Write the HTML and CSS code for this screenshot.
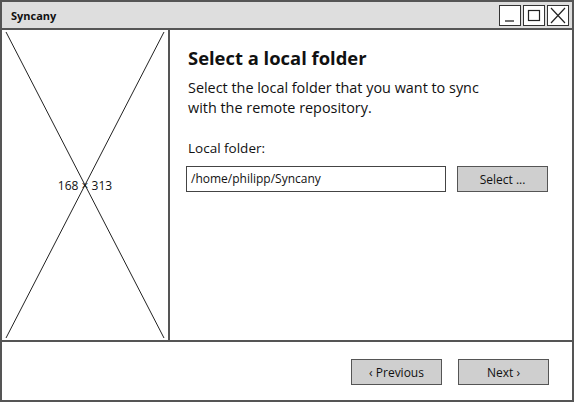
FILE: index.html
```html
<!DOCTYPE html>
<html lang="en">

<head>
    <meta charset="UTF-8">
    <meta name="viewport" content="width=device-width, initial-scale=1.0">
    <title>Syncany</title>
    <link rel="stylesheet" href="styles.css">
</head>

<body>
    <div class="window">
        <div class="titlebar">
            <span class="title">Syncany</span>
            <div class="controls">
                <span class="ctrl">
                    <svg width="20" height="19" viewBox="0 0 20 19"><path d="M5 15 H14" stroke="#222" stroke-width="1.3" fill="none"/></svg>
                </span>
                <span class="ctrl">
                    <svg width="20" height="19" viewBox="0 0 20 19"><rect x="4.5" y="4.5" width="11" height="10" stroke="#222" stroke-width="1.2" fill="none"/></svg>
                </span>
                <span class="ctrl">
                    <svg width="20" height="19" viewBox="0 0 20 19"><path d="M3 2 L17 17 M17 2 L3 17" stroke="#222" stroke-width="1.2" fill="none"/></svg>
                </span>
            </div>
        </div>

        <div class="main">
            <div class="placeholder">
                <svg class="cross" width="166" height="310" viewBox="0 0 166 310" preserveAspectRatio="none">
                    <path d="M4 2 L162 308 M162 2 L4 308" stroke="#222" stroke-width="1" fill="none"/>
                </svg>
                <span class="size">168 &times; 313</span>
            </div>

            <div class="content">
                <h1>Select a local folder</h1>
                <p class="desc">Select the local folder that you want to sync<br>with the remote repository.</p>
                <label class="field-label">Local folder:</label>
                <div class="row">
                    <div class="input">/home/philipp/Syncany</div>
                    <button class="btn">Select ...</button>
                </div>
            </div>
        </div>

        <div class="footer">
            <button class="btn">&lsaquo; Previous</button>
            <button class="btn">Next &rsaquo;</button>
        </div>
    </div>
</body>

</html>
```

FILE: styles.css
```css
body {
    margin: 0;
    font-family: "Open Sans", "DejaVu Sans", sans-serif;
    color: #111;
}

.window {
    width: 570px;
    height: 398px;
    border: 2px solid #555;
    display: flex;
    flex-direction: column;
    background: #fff;
}

.titlebar {
    height: 26px;
    border-bottom: 2px solid #555;
    background: #dedede;
    display: flex;
    align-items: center;
    justify-content: space-between;
    padding-left: 9px;
}

.title {
    font-size: 11px;
    font-weight: bold;
}

.controls {
    display: flex;
    gap: 2px;
    margin-right: 3px;
    margin-top: 1px;
}

.ctrl {
    width: 20px;
    height: 19px;
    border: 1px solid #333;
    background: #fff;
    display: block;
}

.ctrl svg {
    display: block;
}

.main {
    height: 310px;
    display: flex;
    border-bottom: 2px solid #555;
}

.placeholder {
    width: 166px;
    border-right: 2px solid #555;
    position: relative;
    display: flex;
    align-items: center;
    justify-content: center;
}

.cross {
    position: absolute;
    top: 0;
    left: 0;
}

.size {
    position: relative;
    font-size: 12px;
}

.content {
    flex: 1;
    padding: 16px 0 0 18px;
}

h1 {
    margin: 0;
    font-size: 18.4px;
    font-weight: bold;
    line-height: 24px;
}

.desc {
    margin: 8px 0 0;
    font-size: 14.4px;
    line-height: 20px;
}

.field-label {
    display: block;
    margin-top: 20px;
    font-size: 13.5px;
    line-height: 20px;
}

.row {
    display: flex;
    gap: 11px;
    margin-top: 8px;
    margin-left: -2px;
}

.input {
    width: 254px;
    height: 24px;
    border: 1px solid #444;
    padding-left: 4px;
    font-size: 12px;
    line-height: 24px;
}

.btn {
    width: 91px;
    height: 26px;
    border: 1px solid #555;
    background: #cfcfcf;
    font-family: inherit;
    font-size: 12px;
    color: #111;
    padding: 0;
}

.footer {
    flex: 1;
    display: flex;
    justify-content: flex-end;
    align-items: flex-start;
    gap: 16px;
    padding: 17px 23px 0 0;
}
```
